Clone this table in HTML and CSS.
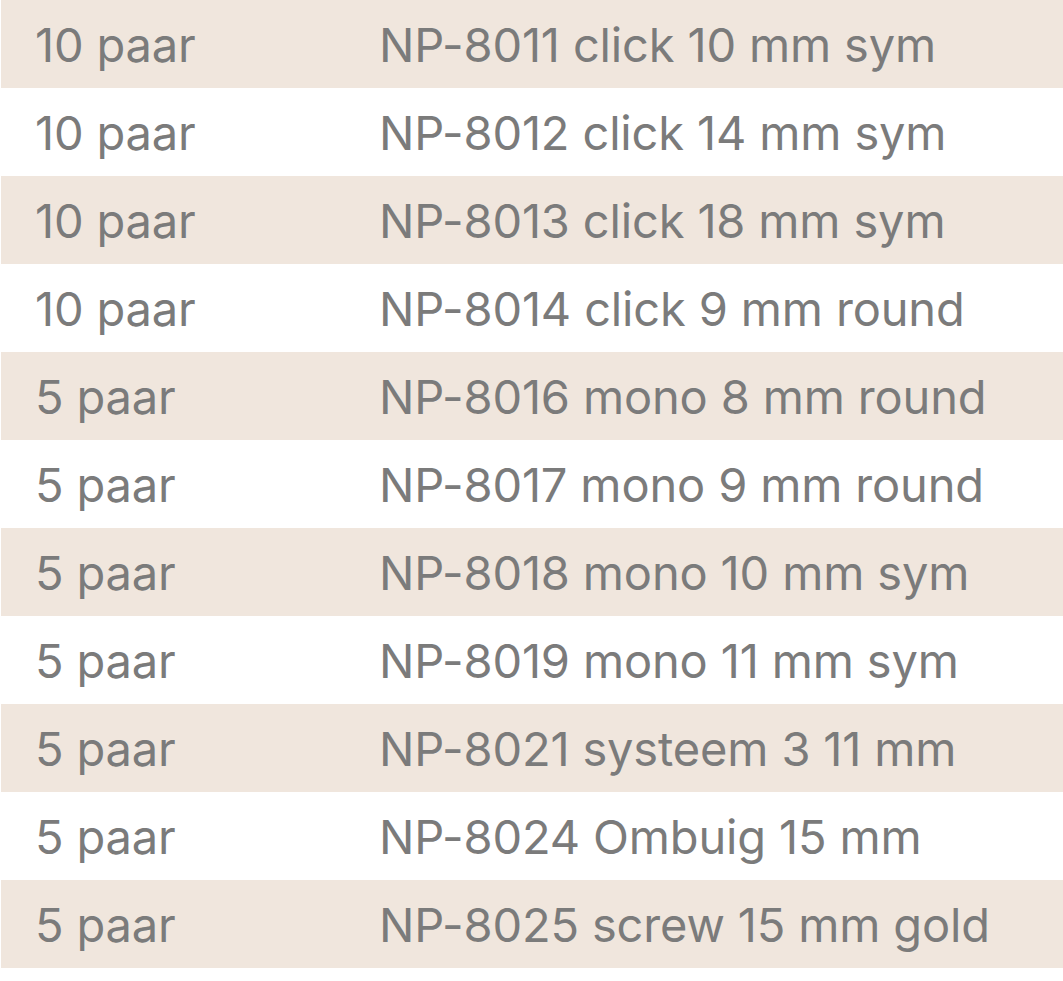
FILE: index.html
```html
<!DOCTYPE html>
<html>
<head>
<meta charset="utf-8">
<link rel="stylesheet" href="styles.css">
</head>
<body>
<table class="tbl">
<tbody>
<tr class="odd"><td class="qty">10 paar</td><td class="name">NP-8011 click 10 mm sym</td></tr>
<tr><td class="qty">10 paar</td><td class="name">NP-8012 click 14 mm sym</td></tr>
<tr class="odd"><td class="qty">10 paar</td><td class="name">NP-8013 click 18 mm sym</td></tr>
<tr><td class="qty">10 paar</td><td class="name">NP-8014 click 9 mm round</td></tr>
<tr class="odd"><td class="qty">5 paar</td><td class="name">NP-8016 mono 8 mm round</td></tr>
<tr><td class="qty">5 paar</td><td class="name">NP-8017 mono 9 mm round</td></tr>
<tr class="odd"><td class="qty">5 paar</td><td class="name">NP-8018 mono 10 mm sym</td></tr>
<tr><td class="qty">5 paar</td><td class="name">NP-8019 mono 11 mm sym</td></tr>
<tr class="odd"><td class="qty">5 paar</td><td class="name">NP-8021 systeem 3 11 mm</td></tr>
<tr><td class="qty">5 paar</td><td class="name">NP-8024 Ombuig 15 mm</td></tr>
<tr class="odd"><td class="qty">5 paar</td><td class="name">NP-8025 screw 15 mm gold</td></tr>
</tbody>
</table>
</body>
</html>
```
FILE: styles.css
```css
html, body {
  margin: 0;
  padding: 0;
  background: #ffffff;
}
.tbl {
  border-collapse: collapse;
  margin-left: 1px;
  width: 1062px;
  table-layout: fixed;
  font-family: Inter, "Noto Sans", sans-serif;
  font-size: 47px;
  color: #7b7b7b;
  letter-spacing: -0.15px;
}
.tbl tr {
  height: 88px;
}
.tbl tr.odd {
  background: #f0e6dd;
}
.tbl td {
  padding: 0;
  vertical-align: middle;
  white-space: nowrap;
}
.tbl td.qty {
  width: 378px;
  padding-left: 34px;
  box-sizing: border-box;
}
```
